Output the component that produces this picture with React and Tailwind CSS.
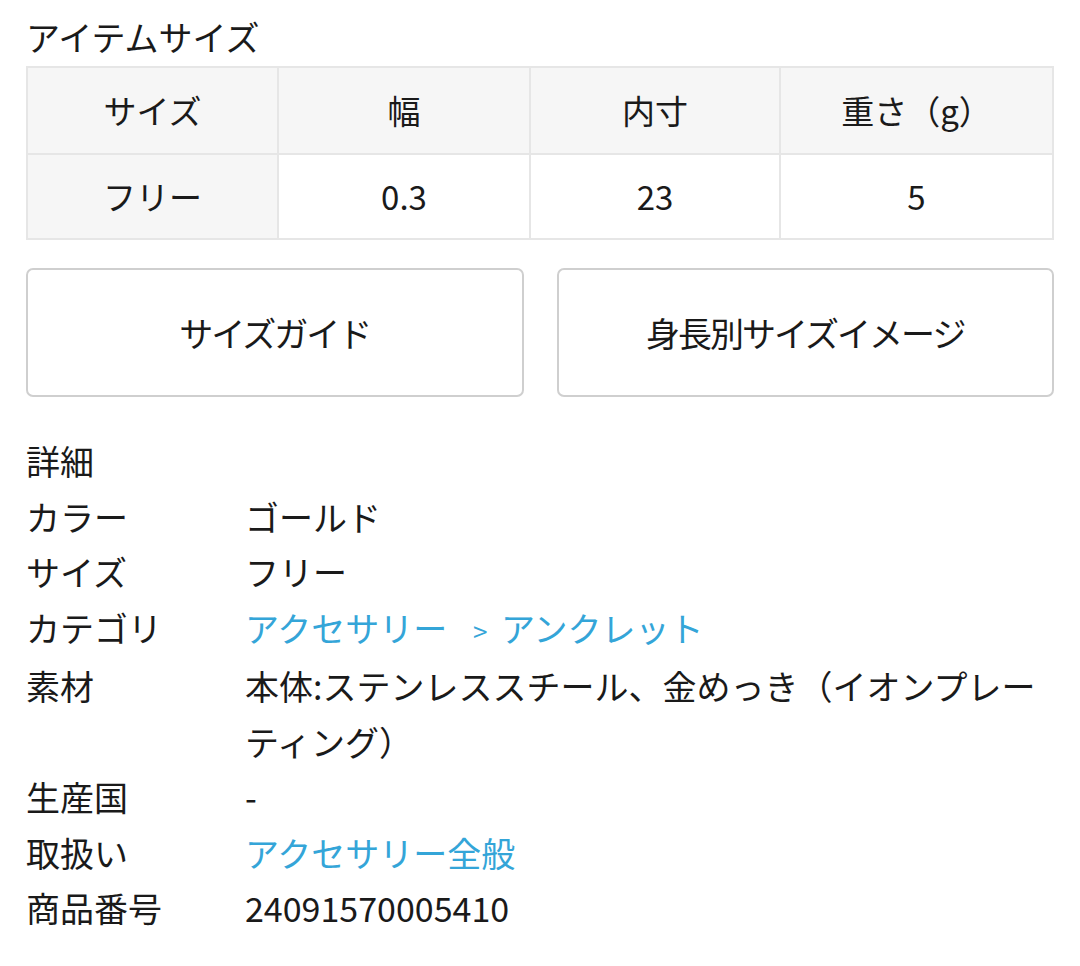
import React from 'react';

const font = { fontFamily: '"Noto Sans CJK JP", "Noto Sans", sans-serif' };

const sizeHead = ['サイズ', '幅', '内寸', '重さ（g）'];
const sizeRow = ['フリー', '0.3', '23', '5'];

const details = [
    { label: 'カラー', value: 'ゴールド' },
    { label: 'サイズ', value: 'フリー' },
    {
        label: 'カテゴリ',
        value: (
            <>
                アクセサリー <span className="text-[26px] pl-[18px] pr-[6px]">&gt;</span> アンクレット
            </>
        ),
        link: true,
    },
    { label: '素材', value: '本体:ステンレススチール、金めっき（イオンプレーティング）' },
    { label: '生産国', value: '-' },
    { label: '取扱い', value: 'アクセサリー全般', link: true },
    { label: '商品番号', value: '24091570005410' },
];

const Cell = ({ children, gray, first, top }) => (
    <div
        className={`flex items-center justify-center h-[85px] border-[#e6e6e6] ${gray ? 'bg-[#f6f6f6]' : 'bg-white'} ${first ? '' : 'border-l-2'} ${top ? '' : 'border-t-2'}`}
    >
        {children}
    </div>
);

const App = () => {
    return (
        <div className="bg-white w-[1080px] min-h-[966px] px-[26px] pt-[12px] text-[34px] text-[#1a1a1a]" style={font}>
            <h2 className="leading-[50px] font-normal">アイテムサイズ</h2>

            {/* size table */}
            <div className="mt-[4px] border-2 border-[#e6e6e6] grid grid-cols-[249px_252px_250px_1fr] text-[33px]">
                {sizeHead.map((h, i) => (
                    <Cell key={h} gray first={i === 0} top>{h}</Cell>
                ))}
                {sizeRow.map((v, i) => (
                    <Cell key={i} gray={i === 0} first={i === 0}>{v}</Cell>
                ))}
            </div>

            {/* buttons */}
            <div className="mt-[28px] flex gap-[33px]">
                <button className="flex-1 h-[129px] border-2 border-[#cfcfcf] rounded-[7px] bg-white leading-none tracking-[-2px]">
                    サイズガイド
                </button>
                <button className="flex-1 h-[129px] border-2 border-[#cfcfcf] rounded-[7px] bg-white leading-none tracking-[-2px]">
                    身長別サイズイメージ
                </button>
            </div>

            {/* details */}
            <div className="mt-[36px] leading-[55.5px]">
                <p>詳細</p>
                {details.map(d => (
                    <div key={d.label} className="flex">
                        <div className="w-[219px] shrink-0">{d.label}</div>
                        <div className={`flex-1 ${d.link ? 'text-[#34a5d8]' : ''}`}>{d.value}</div>
                    </div>
                ))}
            </div>
        </div>
    );
};

export default App;
